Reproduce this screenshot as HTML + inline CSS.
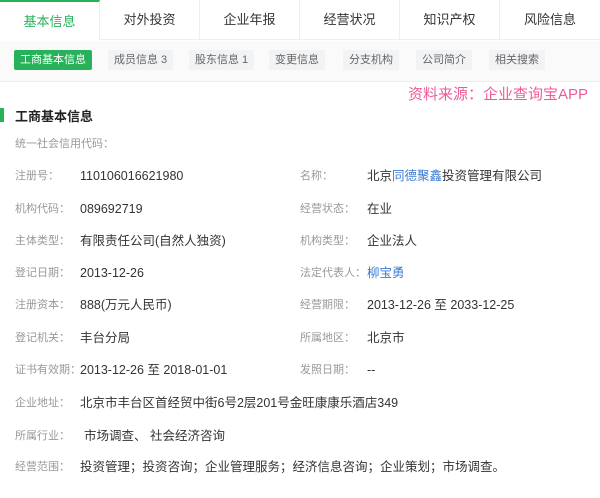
<!DOCTYPE html><html><head><meta charset="utf-8"><style>
body{margin:0;width:600px;height:498px;background:#fff;font-family:"Liberation Sans","Noto Sans CJK SC",sans-serif;position:relative;overflow:hidden}
.a{position:absolute;white-space:nowrap}
.tab{position:absolute;top:0;height:40px;width:100px;line-height:40px;text-align:center;font-size:13px;color:#333;border-right:1px solid #eee;border-bottom:1px solid #eee;box-sizing:border-box}
.pill{position:absolute;top:50px;height:20px;line-height:20px;font-size:11px;color:#666;background:#f2f3f5;padding:0 6px}
.l{position:absolute;font-size:11px;color:#999;line-height:18px;height:18px}
.v{position:absolute;font-size:12.5px;color:#333;white-space:nowrap;line-height:18px;height:18px}
</style></head><body>
<div class="tab" style="left:0;color:#27b15a;border-bottom:none;border-top:2px solid #27b15a">基本信息</div>
<div class="tab" style="left:100px">对外投资</div>
<div class="tab" style="left:200px">企业年报</div>
<div class="tab" style="left:300px">经营状况</div>
<div class="tab" style="left:400px">知识产权</div>
<div class="tab" style="left:500px;border-right:none">风险信息</div>
<div class="a" style="left:0;top:41px;width:600px;height:40px;background:#fafafa;border-bottom:1px solid #eee"></div>
<div class="pill" style="left:14px;background:#27b15a;color:#fff;border-radius:2px">工商基本信息</div>
<div class="pill" style="left:108px">成员信息 3</div>
<div class="pill" style="left:189px">股东信息 1</div>
<div class="pill" style="left:269px">变更信息</div>
<div class="pill" style="left:343px">分支机构</div>
<div class="pill" style="left:416px">公司简介</div>
<div class="pill" style="left:489px">相关搜索</div>
<div class="a" style="left:408px;top:83px;font-size:15px;color:#f05a9a">资料来源：企业查询宝APP</div>
<div class="a" style="left:0;top:108px;width:4px;height:14px;background:#27b15a"></div>
<div class="a" style="left:15px;top:106px;font-size:13px;color:#222;font-weight:bold">工商基本信息</div>
<div class="l" style="left:15px;top:135px">统一社会信用代码：</div>
<div class="l" style="left:15px;top:167px">注册号：</div><div class="v" style="left:80px;top:167px">110106016621980</div>
<div class="l" style="left:300px;top:167px">名称：</div><div class="v" style="left:367px;top:167px">北京<span style="color:#3a7bd5">同德聚鑫</span>投资管理有限公司</div>
<div class="l" style="left:15px;top:200px">机构代码：</div><div class="v" style="left:80px;top:200px">089692719</div>
<div class="l" style="left:300px;top:200px">经营状态：</div><div class="v" style="left:367px;top:200px">在业</div>
<div class="l" style="left:15px;top:232px">主体类型：</div><div class="v" style="left:80px;top:232px">有限责任公司(自然人独资)</div>
<div class="l" style="left:300px;top:232px">机构类型：</div><div class="v" style="left:367px;top:232px">企业法人</div>
<div class="l" style="left:15px;top:264px">登记日期：</div><div class="v" style="left:80px;top:264px">2013-12-26</div>
<div class="l" style="left:300px;top:264px">法定代表人：</div><div class="v" style="left:367px;top:264px;color:#3a7bd5">柳宝勇</div>
<div class="l" style="left:15px;top:296px">注册资本：</div><div class="v" style="left:80px;top:296px">888(万元人民币)</div>
<div class="l" style="left:300px;top:296px">经营期限：</div><div class="v" style="left:367px;top:296px">2013-12-26 至 2033-12-25</div>
<div class="l" style="left:15px;top:329px">登记机关：</div><div class="v" style="left:80px;top:329px">丰台分局</div>
<div class="l" style="left:300px;top:329px">所属地区：</div><div class="v" style="left:367px;top:329px">北京市</div>
<div class="l" style="left:15px;top:361px">证书有效期：</div><div class="v" style="left:80px;top:361px">2013-12-26 至 2018-01-01</div>
<div class="l" style="left:300px;top:361px">发照日期：</div><div class="v" style="left:367px;top:361px">--</div>
<div class="l" style="left:15px;top:394px">企业地址：</div><div class="v" style="left:80px;top:394px">北京市丰台区首经贸中街6号2层201号金旺康康乐酒店349</div>
<div class="l" style="left:15px;top:427px">所属行业：</div><div class="v" style="left:84px;top:427px">市场调查、 社会经济咨询</div>
<div class="l" style="left:15px;top:458px">经营范围：</div><div class="v" style="left:80px;top:458px">投资管理；投资咨询；企业管理服务；经济信息咨询；企业策划；市场调查。</div>
</body></html>
